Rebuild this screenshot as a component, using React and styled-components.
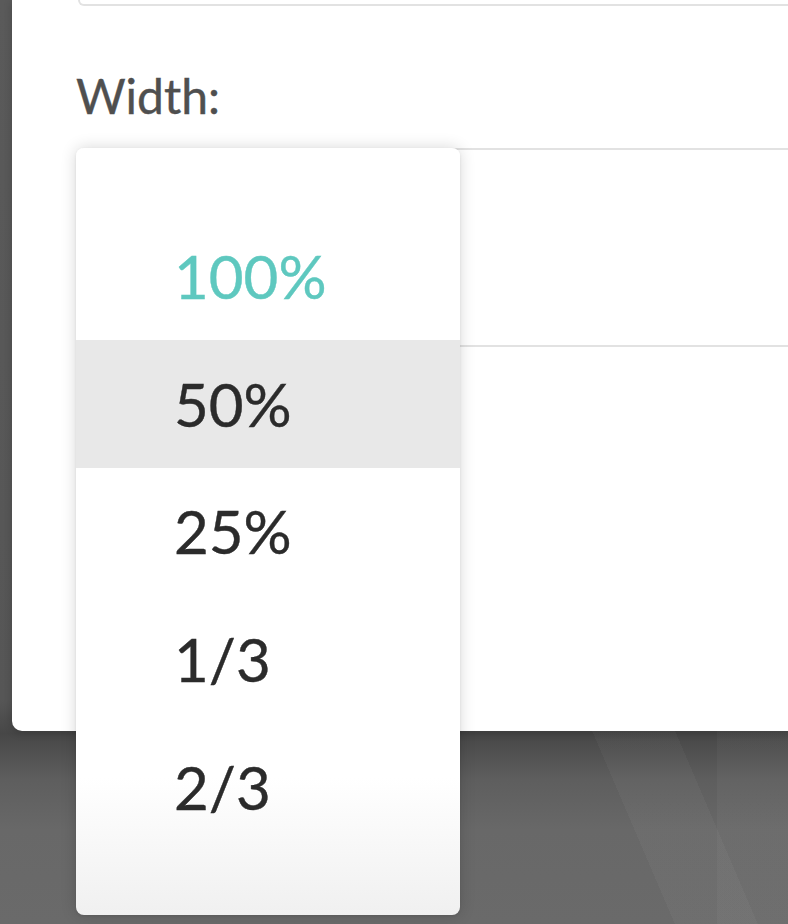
import styled, { createGlobalStyle } from "styled-components";

const GlobalStyle = createGlobalStyle`
  html, body {
    margin: 0;
    padding: 0;
    background: #6a6a6a;
  }
  body {
    font-family: Lato, "Open Sans", "Liberation Sans", sans-serif;
  }
`;

const Backdrop = styled.div`
  position: relative;
  width: 788px;
  height: 924px;
  overflow: hidden;
  background:
    linear-gradient(66.8deg, transparent 0 57%, rgba(255, 255, 255, 0.03) 57% 64%, transparent 64%),
    linear-gradient(to right, transparent 0 91%, rgba(255, 255, 255, 0.03) 91%),
    linear-gradient(to bottom, #5a5a5a 0, #565656 700px, #474747 734px, #5e5e5e 780px, #686868 830px, #6a6a6a 924px);
`;

const Panel = styled.div`
  margin-left: 12px;
  width: 820px;
  height: 731px;
  box-sizing: border-box;
  padding-left: 64px;
  background: #fff;
  border-radius: 0 0 0 10px;
  box-shadow: 0 2px 8px rgba(0, 0, 0, 0.2);
`;

const InputEdge = styled.div`
  height: 4px;
  margin-left: 2px;
  border: 2px solid #e2e2e2;
  border-top: none;
  border-radius: 0 0 0 12px;
`;

const Label = styled.div`
  margin-top: 66px;
  font-size: 48px;
  line-height: 48px;
  color: #4f4f4f;
  -webkit-text-stroke: 0.4px #4f4f4f;
`;

const Field = styled.div`
  position: relative;
  margin-top: 28px;
`;

const SelectBox = styled.div`
  height: 195px;
  border: 2px solid #e2e2e2;
  border-right: none;
  border-radius: 10px 0 0 10px;
`;

const Menu = styled.ul`
  position: absolute;
  top: 0;
  left: 0;
  width: 384px;
  height: 767px;
  margin: 0;
  padding: 64px 0;
  box-sizing: border-box;
  list-style: none;
  border-radius: 8px;
  background: linear-gradient(to bottom, #fff 0, #fff 630px, #f0f0f0 100%);
  box-shadow: 0 0 16px rgba(0, 0, 0, 0.16), 0 1px 3px rgba(0, 0, 0, 0.08);
`;

const Option = styled.li`
  display: flex;
  align-items: center;
  height: 127.8px;
  padding-left: 98px;
  font-size: 60px;
  color: ${(p) => (p.selected ? "#5ec8bf" : "#2b2b2b")};
  -webkit-text-stroke: 0.4px ${(p) => (p.selected ? "#5ec8bf" : "#2b2b2b")};
  background: ${(p) => (p.active ? "#e8e8e8" : "transparent")};
`;

const options = ["100%", "50%", "25%", "1/3", "2/3"];

export default function App() {
  return (
    <>
      <GlobalStyle />
      <Backdrop>
        <Panel>
          <InputEdge />
          <Label>Width:</Label>
          <Field>
            <SelectBox />
            <Menu>
              {options.map((o, i) => (
                <Option key={o} selected={i === 0} active={i === 1}>
                  {o}
                </Option>
              ))}
            </Menu>
          </Field>
        </Panel>
      </Backdrop>
    </>
  );
}
